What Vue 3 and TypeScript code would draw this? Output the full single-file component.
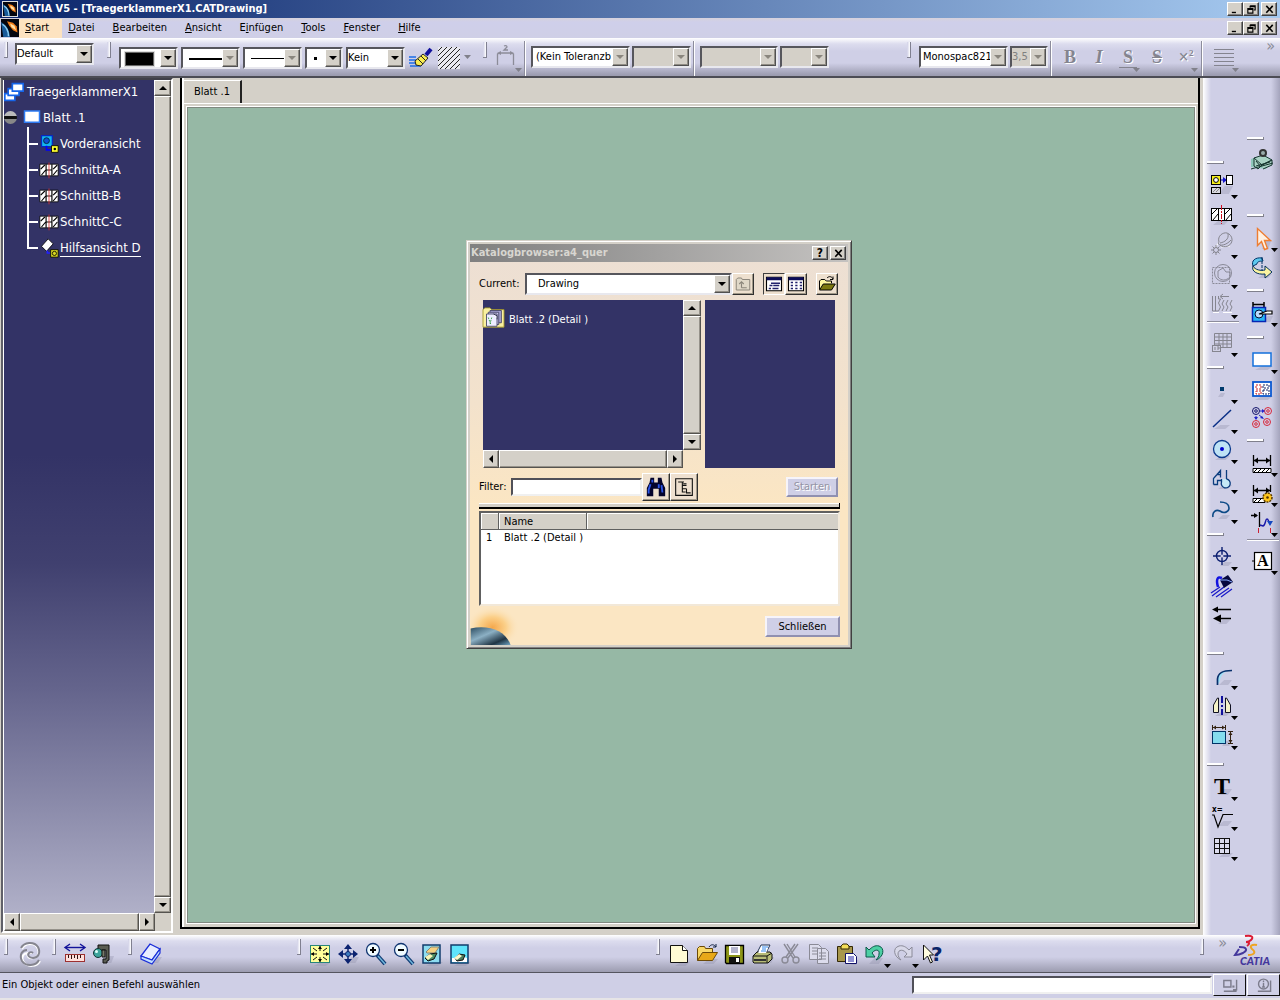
<script setup lang="ts">
import { h, ref } from 'vue'

const shade = (x: number, y: number, w: number, ht: number) =>
  `<path d="M${x} ${y + ht}L${x + w * 0.4} ${y}H${x + w}L${x + w * 0.7} ${y + ht}Z" fill="#8e8ea8" opacity=".35"/>`

const icons: Record<string, string> = {
  newView: shade(9, 13, 14, 8) + '<rect x="1.5" y="2.5" width="9" height="9" fill="#f6ee1c" stroke="#000"/><circle cx="6" cy="7" r="2.4" fill="#fff" stroke="#000"/><path d="M11 7h3" stroke="#00c"/><path d="M13 4l4 3-4 3z" fill="#11c"/><rect x="16.500" y="2.500" width="6" height="9" fill="#fff" stroke="#000"/><rect x="1.500" y="14.500" width="9" height="6" fill="#d8d8e0" stroke="#000"/><path d="M3 19l4-4M6 19l4-4" stroke="#888"/>',
  section: shade(3, 17, 16, 5) + '<rect x="1.500" y="5.500" width="20" height="12" fill="#fff" stroke="#000"/><path d="M8.500 5v13M14.500 5v13M2 11l5-5M3 17l5-6M15 11l5-5M16 17l5-6" stroke="#000"/><path d="M11.500 2v19" stroke="#d01020" stroke-dasharray="5 1 2 1"/>',
  detailView: '<path d="M9 9l-4 6M11 14l9-1" stroke="#fff"/><g fill="none" stroke="#85858f"><path d="M9 9C7 3 13-1 17 0c6 2 7 10 1 13-3 1-6 1-8-1"/><path d="M10 10c5-1 9-4 8-9M9 9c-3 4 6 5 12-2"/><circle cx="6" cy="17" r="2.500"/><path d="M6 12v3M6 19v3M1 17h3M8 17h3M2.500 13.500l2 2M7.500 18.500l2 2M9.500 13.500l-2 2M4.500 18.500l-2 2"/></g>',
  clipping: '<g fill="none" stroke="#8a8a98"><circle cx="13" cy="10" r="8.500"/><path d="M8 14V8l5-3 3 4h4v5c-4 4-9 4-12 0z"/><path d="M2.500 4.500h17v16h-17z" stroke-dasharray="2 1"/></g>',
  broken: '<path d="M3 19.500h6M13 19.500h9" stroke="#fff"/><g fill="none" stroke="#85858f"><path d="M2.500 3v15h6l2-4-2-4 2-4h-2V3M14 7l-2 4 2 3-2 4M18 7l-2 4 2 3-2 4M22 7l-2 4 2 3-2 4M11 3.500h8M13 1l-3 2.500L13 6M5.500 3v15"/></g>',
  wizard: '<g fill="none" stroke="#85858f"><path d="M4.500 2.500h17v14h-17zM4 6h17M4 9.500h17M4 13h17M9 3v13M13 3v13M17 3v13"/><rect x="2.500" y="14.500" width="8" height="6" fill="#d0d0e4"/><path d="M5 16v3M7 16h2v2H7"/></g>',
  point: shade(8, 15, 7, 4) + '<rect x="10" y="9" width="4" height="4" fill="#003a6c"/>',
  line: shade(4, 17, 16, 4) + '<path d="M3 19L21 2" stroke="#0a2f86" stroke-width="1.500"/>',
  circle: shade(5, 18, 15, 4) + '<circle cx="12" cy="11" r="8.500" fill="#bfe3f5" stroke="#0c3a8c" stroke-width="1.300"/><circle cx="12" cy="11" r="2" fill="#0000d0"/>',
  profile: shade(8, 17, 14, 4) + '<path d="M3.500 16.500v-6l7-8v4h-4M16.500 2v9M10.500 2.500V9.500M3.500 16.500h4v-4h4M16.500 11a4.500 4.500 0 1 1-5 3v-3" fill="#c5e9f6" stroke="#0b3c7e" stroke-width="1.300"/>',
  spline: shade(8, 17, 12, 4) + '<path d="M3 19c-1-5 3-8 7-6 4 3 9 1 9-3 0-4-4-6-9-6" fill="none" stroke="#0c4a86" stroke-width="1.600"/>',
  axis: shade(10, 17, 12, 4) + '<circle cx="12" cy="11" r="5.500" fill="none" stroke="#0c1f70" stroke-width="1.400"/><path d="M12 2v18M3 11h18" stroke="#0c1f70" stroke-width="1.400"/><circle cx="12" cy="11" r="1.500" fill="#d0d0e8"/>',
  fill: '<path d="M2 21L14 12M6 22l13-9M11 22l11-8M1 18l9-6" stroke="#1818c8" stroke-width="1.200"/><path d="M10 5l8-5 5 7-9 6z" fill="#05073c"/><path d="M10 5l7 0 5 2" stroke="#8af" fill="none"/><path d="M12 3C7 1 6 5 8 12" stroke="#1414e0" stroke-width="2.500" fill="none"/>',
  arrows: shade(8, 15, 12, 4) + '<path d="M6 4.500h15M9 13.500h12" stroke="#000" stroke-width="1.400"/><path d="M2 4.500l6-3v6zM3 13.500l8-4v8z" fill="#000"/>',
  corner: shade(9, 16, 13, 5) + '<path d="M8 20V16C8 10 12 6 22 6L17 7C12 9 10 14 10 17z" fill="#9fe0f6"/><path d="M7.500 21V15C8 9 12 6.500 22 6.500" stroke="#08306c" stroke-width="1.700" fill="none"/>',
  mirror: shade(5, 18, 16, 4) + '<path d="M3.500 18.500V11l4-7h1v14.500zM20.500 18.500V11l-4-7h-1v14.500z" fill="#f5f2c8" stroke="#112"/><path d="M12 2v19" stroke="#10109c" stroke-width="2" stroke-dasharray="7 2 2 2"/>',
  dims: shade(12, 17, 10, 5) + '<rect x="2.500" y="7.500" width="13" height="12" fill="#84dcee" stroke="#036"/><path d="M2.500 1v5M15.500 1v5M3 3.500h12M18 7.500h5M18 19.500h5M20.500 8v11" stroke="#321"/><path d="M3 3.500l3-2v4zM15 3.500l-3-2v4zM20.500 8l-2 3h4zM20.500 19l-2-3h4z" fill="#321"/>',
  text: shade(8, 14, 14, 6) + '<text x="4" y="19" font-family="Liberation Serif, serif" font-weight="700" font-size="24">T</text>',
  rough: shade(8, 16, 14, 5) + '<text x="2" y="7" font-family="DejaVu Sans Condensed, sans-serif" font-size="8" font-weight="700">x=</text><path d="M2 10h2l4 12 5-12.500h10" fill="none" stroke="#000" stroke-width="1.200"/>',
  grid: shade(9, 18, 14, 4) + '<path d="M4.500 3.500h15v15h-15zM4 8.500h15M4 13.500h15M9.500 4v14M14.500 4v14" fill="#dde" stroke="#111" shape-rendering="crispEdges"/>',
  bench: '<path d="M1 10l6-2 15 3-6 9-15-2z" fill="#8fc7ba"/><path d="M4 9l9-3 9 5-10 5zM4 9v8l4 3 4-4M12 16l10-5v5l-9 4M1 20l22-6" fill="#a9d2c4" stroke="#16352f"/><path d="M6 17l14-4M6 12l5 6" stroke="#16352f"/><circle cx="13" cy="4" r="4" fill="#333"/><circle cx="13" cy="4" r="2" fill="#9aa"/>',
  select: shade(12, 15, 9, 8) + '<path d="M7.500 2.500v17l4-4 3 8 3-1-3-8h6z" fill="#fff1e2" stroke="#ee7d31" stroke-width="1.400"/>',
  rotate: shade(8, 18, 14, 4) + '<path d="M12 2C5 1 1 5 3 10l4-2c0-2 2-3 6-3z" fill="#5cc8ee" stroke="#036"/><path d="M3 10c2 4 8 5 12 4v-4l7 6-7 6v-4C7 19 1 15 3 10z" fill="#fbf4a0" stroke="#02305c"/><path d="M12 1v14" stroke="#036" stroke-dasharray="3 1"/>',
  catalog: shade(14, 15, 9, 6) + '<path d="M3 1v5M14 1v5M3 3.500h11" stroke="#000" stroke-width="1.500"/><path d="M2.500 6.500h13v14h-13z" fill="#28b4f4" stroke="#0626b4" stroke-width="1.500"/><circle cx="9" cy="13" r="4" fill="#bdf" stroke="#013"/><path d="M9 13L17 10h5v3h-5z" stroke="#000" stroke-width="1.200" fill="#fff"/>',
  sheet: shade(5, 18, 18, 4) + '<rect x="3" y="5" width="18" height="13" fill="#fff" stroke="#1370dc" stroke-width="1.500"/>',
  sheetDetail: shade(5, 18, 18, 4) + '<rect x="3" y="4" width="18" height="14" fill="#fff" stroke="#0a58d0" stroke-width="1.800"/><path d="M6 7h5v4H6zM6 13h5v3H6z" fill="none" stroke="#c22" stroke-dasharray="2 1"/><path d="M13 7h6v3h-6zM13 12h6v4h-6z" fill="none" stroke="#126" stroke-dasharray="2 1"/>',
  instances: '<g fill="none"><g stroke="#14146c"><circle cx="6" cy="3" r="3.500"/><circle cx="6" cy="3" r="1.300"/></g><g stroke="#d8283c"><circle cx="18" cy="3" r="3.500"/><circle cx="18" cy="3" r="1.300"/><circle cx="6" cy="16" r="3.500"/><circle cx="6" cy="16" r="1.300"/><circle cx="17" cy="14" r="3.500"/><circle cx="17" cy="14" r="1.300"/></g></g><path d="M10 3h3M6 8v3M9 7l4 3" stroke="#22c"/><path d="M12 1l3 2-3 2zM4 9h4l-2 3zM14 11l-4-1 2-2z" fill="#22c"/>',
  dimension: '<path d="M3.500 4v11M20.500 4v11M4 9.500h16" stroke="#000" stroke-width="1.300"/><path d="M4 9.500l4-3v6zM20 9.500l-4-3v6z" fill="#000"/><path d="M3 17.500h18v4H3z" fill="#fff" stroke="#000"/><path d="M4 21l3-3M8 21l3-3M12 21l3-3M16 21l3-3" stroke="#000"/>',
  dimensionGear: '<path d="M3.500 4v11M20.500 4v7M4 9.500h16" stroke="#000" stroke-width="1.300"/><path d="M4 9.500l4-3v6zM20 9.500l-4-3v6z" fill="#000"/><path d="M3 17.500h12v4H3z" fill="#fff" stroke="#000"/><path d="M4 21l3-3M8 21l3-3" stroke="#000"/><circle cx="17.500" cy="16.500" r="4.500" fill="#ffc61c" stroke="#5c3c00" stroke-dasharray="2 1" stroke-width="1.500"/><circle cx="17.500" cy="16.500" r="1.300" fill="#530"/>',
  interrupt: '<path d="M1 4.500h6M9.500 1v15" stroke="#000" stroke-width="1.300"/><path d="M8 4.500L4 2v5z" fill="#000"/><path d="M10 14l3 1c3-1 2-7 4-7s1 5 4 3" fill="none" stroke="#1818a8" stroke-width="1.400"/><path d="M17 10h6l-3 5z" fill="#1448c0"/><path d="M8.500 17v5M20.500 17v5" stroke="#c23"/>',
  frame: '<rect x="4.500" y="3.500" width="17" height="17" fill="#fff" stroke="#000" stroke-width="1.200"/><path d="M2 12h3" stroke="#000"/><text x="7" y="17" font-family="Liberation Serif, serif" font-weight="700" font-size="16">A</text>',
  update: '<g fill="none" stroke="#fff" stroke-width="2"><path d="M4 7c3-6 13-7 16 0 2 5-1 9-5 9-5 1-7-3-4-5h3M22 19c-3 6-13 7-17 0-2-5 1-8 5-8"/></g><g fill="none" stroke="#85858f" stroke-width="2"><path d="M3 6c3-6 13-7 17-1 3 6 0 11-5 11-4 0-6-3-4-5 1-1 3-1 4 0M21 18c-3 6-13 7-17 1-3-6 0-11 5-11"/></g>',
  measure: '<path d="M3 5.500h18" stroke="#12129a" stroke-width="1.400"/><path d="M7 2L2 5.500 7 9M17 2l5 3.500L17 9" fill="none" stroke="#12129a" stroke-width="1.400"/><rect x="2.500" y="12.500" width="19" height="7" fill="#ffe0dc" stroke="#9c3030"/><path d="M5.500 13v3M8.500 13v4M11.500 13v3M14.500 13v4M17.500 13v3" stroke="#301010"/>',
  caliper: shade(14, 14, 9, 7) + '<path d="M7 3h11v15l-2 1v2h-4v-4h3V8H7z" fill="#5a5c52" stroke="#111"/><circle cx="7" cy="11" r="4.500" fill="#3ca49c" stroke="#133"/><path d="M11 8h3v7h-3z" fill="#777a6a" stroke="#111"/><circle cx="5.500" cy="9.500" r="1.500" fill="#e0fff8"/>',
  book: shade(10, 15, 13, 6) + '<path d="M2 14L11 2l10 5-8 11z" fill="#e8edff" stroke="#1b2ed8" stroke-width="1.300"/><path d="M2 14v3l11 5 8-11V7l-8 11z" fill="#c3e1ff" stroke="#1b2ed8" stroke-width="1.200"/>',
  fitAll: shade(6, 20, 17, 4) + '<rect x="2.500" y="3.500" width="19" height="17" fill="#ffff9a" stroke="#28857a"/><path d="M12 4v5M12 15v5M3 12h6M15 12h6M5 6l4 3M19 6l-4 3M5 18l4-3M19 18l-4-3" stroke="#111"/><path d="M12 4l-2 3h4zM12 20l-2-3h4zM3 12l3-2v4zM21 12l-3-2v4z"/>',
  pan: shade(11, 15, 12, 6) + '<path d="M12 4v16M4 12h16" stroke="#0c2370" stroke-width="1.500"/><path d="M12 2l-4 5h8zM12 22l-4-5h8zM2 12l5-4v8zM22 12l-5-4v8z" fill="#0c2370"/><circle cx="12" cy="12" r="2.500" fill="#3d7cc0" stroke="#0c2370"/>',
  zoomIn: '<path d="M13 13l8 9" stroke="#0f3b74" stroke-width="4"/><path d="M14 14l7 8" stroke="#6fb6dc" stroke-width="1.500"/><circle cx="9" cy="8" r="6.500" fill="#f0fbff" stroke="#0f3470" stroke-width="1.300"/><path d="M9 5v6M6 8h6" stroke="#000" stroke-width="2"/>',
  zoomOut: '<path d="M13 13l8 9" stroke="#0f3b74" stroke-width="4"/><path d="M14 14l7 8" stroke="#6fb6dc" stroke-width="1.500"/><circle cx="9" cy="8" r="6.500" fill="#f0fbff" stroke="#0f3470" stroke-width="1.300"/><path d="M6 8h6" stroke="#000" stroke-width="2"/>',
  hide: shade(6, 20, 17, 4) + '<rect x="3" y="3" width="17" height="18" fill="#8cdcf0" stroke="#123c6c" stroke-width="1.500"/><path d="M6 10l5-5h8l-4 6H7z" fill="#f4d080" stroke="#887"/><path d="M5 16l5-4 7-1-3 6-6 2z" fill="#4c8c64" stroke="#111"/><path d="M5 15l5-3 3 2-5 4z" fill="#f8f4b8"/>',
  swap: shade(6, 20, 17, 4) + '<rect x="3" y="3" width="17" height="18" fill="#5ee4fb" stroke="#123c6c" stroke-width="1.500"/><path d="M4 20v-4h4l3-3 8 3v4z" fill="#fff"/><path d="M7 16l4-4 6 1-2 5-6 1z" fill="#4c7c5c" stroke="#111"/><path d="M6 16l5-4 3 2-5 4z" fill="#fbf8cc"/>',
  newDoc: shade(8, 20, 15, 4) + '<path d="M3.500 3.500h12l5 5v12h-17z" fill="#fffbd4" stroke="#111"/><path d="M15.500 3.500v5h5" fill="#fff" stroke="#111"/>',
  open: shade(8, 17, 15, 5) + '<path d="M2.500 18.500V6.500l2-2h5l1 2h7v4" fill="#f8d868" stroke="#6c4a08"/><path d="M2.500 18.500l5-8h15l-5 8z" fill="#e8a818" stroke="#6c4a08"/><path d="M14 5c2-3 5-3 7 0M21 5V2M21 5h-3" fill="none" stroke="#124"/>',
  save: '<path d="M2.500 3.500h18v18h-17l-1-1z" fill="#8c9418" stroke="#000" stroke-width="1.300"/><rect x="6" y="4" width="11" height="9" fill="#fff"/><path d="M8 6h7M8 8h7M8 10h7" stroke="#669"/><rect x="6" y="15" width="11" height="6" fill="#111"/><rect x="13" y="16" width="3" height="4" fill="#fff"/>',
  print: shade(14, 15, 9, 6) + '<path d="M6 11l4-8h9l-4 8z" fill="#fff" stroke="#235"/><path d="M11 5h6M10 7h6M9 9h6" stroke="#38e"/><path d="M2 14l4-4h13l2 2v5l-4 4H3l-1-1z" fill="#b8bc78" stroke="#111"/><path d="M7 11l3-5h7l-2 5z" fill="#fff"/><path d="M11 7h4M10 9h5" stroke="#38e"/><path d="M2 14h14l5-3M16 14v7" fill="none" stroke="#111"/><path d="M3 18h12" stroke="#333" stroke-width="2"/>',
  cut: '<g fill="none" stroke="#8a8a96" stroke-width="1.400"><path d="M5 2l9 14M8 2l8 13M19 2L9 16M16 2L7 15"/><circle cx="6" cy="18" r="3"/><circle cx="17" cy="18" r="3"/></g>',
  copy: '<g stroke="#8a8a96" fill="#dcdcec"><path d="M2.500 2.500h9l3 3v12h-12zM10.500 6.500h8l3 3v12h-11z"/><path d="M5 6h6M5 9h5M5 12h5M12 11h7M12 14h7M12 17h7"/></g>',
  paste: shade(16, 18, 7, 5) + '<path d="M2.500 4.500h15v15h-15z" fill="#a8974c" stroke="#332806"/><path d="M6 4l2-2h4l2 2v3H6z" fill="#f2dc58" stroke="#332806"/><path d="M10.500 11.500h8l3 3v7h-11z" fill="#fff" stroke="#116"/><path d="M13 15h6M13 17h6M13 19h6" stroke="#22a"/>',
  undo: shade(6, 16, 14, 6) + '<path d="M3 5v10h9l-3-4c3-4 8-4 7 1 0 2-1 4-3 6 8-3 9-12 3-14C12 3 9 5 6 8z" fill="#4ccfa4" stroke="#0a5848"/>',
  redo: '<path d="M21 5v10h-8l3-3c-3-5-9-5-9 0 0 2 1 4 3 6-7-3-9-12-2-14 4-1 7 1 10 4z" fill="#d8d8e8" stroke="#8a8a98"/>',
  whatsThis: '<path d="M4.500 3v15l4-4 3 7 2-1-3-7h4z" fill="#fffde0" stroke="#111"/><text x="12" y="19" font-family="DejaVu Sans, sans-serif" font-weight="700" font-size="20" fill="#0a2468">?</text>',
  brush: '<path d="M0 11h7M0 14h7M0 17h10M1 20h11" stroke="#1b6ee8" stroke-width="1.500"/><path d="M6 15l8-7 5 4-7 8-5-1z" fill="#f8ec50" stroke="#222"/><path d="M9 13l5 5M12 10l5 5" stroke="#222"/><path d="M17 9l5-6" stroke="#10109c" stroke-width="4"/>',
  hatch: '<rect x="1" y="1" width="22" height="22" fill="#e8e8f0"/><path d="M1 5l4-4M1 10l9-9M1 15L15 1M1 20L20 1M3 23L23 3M8 23L23 8M13 23l10-10M18 23l5-5" stroke="#222"/>',
  dimStyle: '<g fill="none" stroke="#8c8c98" stroke-width="1.300"><path d="M2.500 20V9l3-1h10l3 1v11"/><path d="M9 1c2-1 3 0 3 1l-3 3h4"/></g><path d="M2 8l4-2v4zM19 8l-4-2v4z" fill="#8c8c98"/>',
  minus: '<path d="M4 17h9v3H4z"/>',
  restore: '<path d="M9 4h11v9h-3M9 4v4M9 6h11M4 10h11v10H4zM4 12h11" fill="none" stroke="#000" stroke-width="2.500"/>',
  close: '<path d="M5 4l14 15M19 4L5 19" stroke="#000" stroke-width="3.500"/>',
  folderUp: '<path d="M3 20V6l2-2h5l1 2h10v14z" fill="#e0d8c8" stroke="#8a857a" stroke-width="1.300"/><path d="M10 17v-6M10 17h7M7 12l3-3 3 3" fill="none" stroke="#8a857a" stroke-width="1.500"/>',
  listA: '<path d="M2 3h20v18H2z" fill="#fff" stroke="#000" stroke-width="1.500"/><path d="M2 3h20v4H2z" fill="#0c0c58"/><path d="M8 11h12M6 14h4M11 14h8M5 18h3M10 18h8" stroke="#22226c" stroke-width="1.700"/>',
  listB: '<path d="M2 3h20v18H2z" fill="#fff" stroke="#000" stroke-width="1.500"/><path d="M2 3h20v4H2z" fill="#0c0c58"/><path d="M5 10h3M11 10h3M17 10h3M5 14h3M11 14h3M17 14h3M5 18h3M11 18h3M17 18h3" stroke="#22226c" stroke-width="2"/>',
  folderOpen: '<path d="M2 19V8l2-2h5l2 2h7v3" fill="#fff8a0" stroke="#000" stroke-width="1.300"/><path d="M2 20l5-8h16l-5 8z" fill="#7c7810" stroke="#000" stroke-width="1.300"/><path d="M12 4c3-3 6-2 8 1M20 6V2M20 6h-4" fill="none" stroke="#000" stroke-width="1.300"/>',
  binoculars: '<path d="M6 2h4v5h4V2h4l1 5 3 6v9h-7v-8H9v8H2v-9l3-6z" fill="#04042c"/><path d="M6 9l-2 6v4M15 9v4M18 10l1 8M8 4v3" stroke="#2b55e8" stroke-width="2" fill="none"/>',
  treeBtn: '<path d="M2 2h20v20H2z" fill="none" stroke="#111" stroke-width="1.300"/><path d="M5 6h7M10 6v12h4M10 10h5M10 14h5M15 14v5h5M11 8h4" fill="none" stroke="#111" stroke-width="1.300"/>',
  root: '<path d="M1 14h12v8H1z" fill="#fff" stroke="#1564e8" stroke-width="2"/><path d="M5 8h13v8H5z" fill="#fff" stroke="#1564e8" stroke-width="2"/><path d="M10 2h13v9H10z" fill="#fff" stroke="#1564e8" stroke-width="2"/>',
  leafSheet: '<path d="M2 4h20v15H2z" fill="#fff" stroke="#2e7cf4" stroke-width="2"/>',
  front: '<path d="M3 2h13v13H3z" fill="#12b6f0" stroke="#0828c0" stroke-width="1.500"/><circle cx="9" cy="8" r="3.500" fill="#1050d0" stroke="#023"/><path d="M9 14v5h6" fill="none" stroke="#00f" stroke-width="2"/><path d="M15 14h8v8h-8z" fill="#ffff30" stroke="#000"/><circle cx="19" cy="18" r="1.500"/>',
  cut3: '<path d="M1 5h22v14H1z" fill="#fff" stroke="#000"/><path d="M8.500 5v14M15.500 5v14M2 11l5-5M3 18l5-6M17 11l5-5M17 18l5-6M9 12h6" stroke="#000" stroke-width="1.400"/><path d="M12 3v19" stroke="#d33"/>',
  aux: '<path d="M3 10l8-9 6 6-8 9z" fill="#fff" stroke="#000"/><path d="M10 15v4M10 18h4" stroke="#22f" stroke-width="2"/><path d="M14 14h9v9h-9z" fill="#d8d820" stroke="#000"/><circle cx="18.500" cy="18.500" r="2.500" fill="none" stroke="#000"/>',
  catalogItem: '<path d="M0 3l2-2h6l2 2h14v20H0z" fill="#f9f0a0" stroke="#a49828"/><path d="M8 4h13v14H8z" fill="#a8a4d4" stroke="#446"/><path d="M6 6h12v14H6z" fill="#c8c4e8" stroke="#446"/><path d="M4 8h12v14H4z" fill="#eef" stroke="#446"/><path d="M6 12l3 8M10 12l-2 7" stroke="#2c9c3c" stroke-dasharray="2 1"/><path d="M12 8l4 2v4" stroke="#224" fill="#fff"/>',
  planet: '<rect width="24" height="24" fill="#05060f"/><path d="M8 3l8 2 5 5 1 8-6-3-5-6z" fill="#f07c18"/><path d="M12 6l6 3 2 6-6-4z" fill="#ffe2a8"/><path d="M0 4c6 3 11 9 12 20H3z" fill="#185a98"/><path d="M2 7c6 4 8 9 8 16" stroke="#8ed0f4" fill="none" stroke-width="2"/>',
  statusA: '<path d="M4 5h10v9H4zM17 18h5V4M4 20h18" fill="none" stroke="#7c7c8c" stroke-width="2"/><path d="M16 12h3v3h-3z" fill="#7c7c8c"/>',
  statusB: '<circle cx="12" cy="10" r="7" fill="none" stroke="#7c7c8c" stroke-width="2"/><path d="M12 8v7M10 14h4M11 6h2M4 20h18V5" fill="none" stroke="#7c7c8c" stroke-width="2"/>',
}

const Icon = (p: { n: string; s?: number }) =>
  h('svg', { viewBox: '0 0 24 24', width: p.s ?? 24, height: p.s ?? 24, 'aria-hidden': 'true', innerHTML: icons[p.n] })
Icon.props = ['n', 's']

const menus = ['Start', 'Datei', 'Bearbeiten', 'Ansicht', 'Einfügen', 'Tools', 'Fenster', 'Hilfe']
const accel: Record<string, number> = { 'Einfügen': 1 }
const winButtons = ['minus', 'restore', 'close']

type Tool = { n: string; arrow?: boolean; sep?: boolean }
type Group = { gap: string; tools: Tool[] }
const t = (n: string, arrow = true, sep = false): Tool => ({ n, arrow, sep })

const leftTools: Group[] = [
  { gap: 'first-a', tools: [t('newView'), t('section'), t('detailView'), t('clipping'), t('broken'), t('wizard', true, true)] },
  { gap: 'near', tools: [t('point'), t('line'), t('circle'), t('profile'), t('spline')] },
  { gap: 'near', tools: [t('axis'), t('fill', false), t('arrows', false)] },
  { gap: 'mid', tools: [t('corner'), t('mirror'), t('dims')] },
  { gap: 'some', tools: [t('text'), t('rough'), t('grid')] },
]
const rightTools: Group[] = [
  { gap: 'first-b', tools: [t('bench', false)] },
  { gap: 'far', tools: [t('select'), t('rotate', false)] },
  { gap: 'snug', tools: [t('catalog')] },
  { gap: 'near', tools: [t('sheet'), t('sheetDetail', false), t('instances', false)] },
  { gap: 'tight', tools: [t('dimension'), t('dimensionGear'), t('interrupt'), t('frame', true, true)] },
]
const bottomGroups: { cls: string; tools: Tool[] }[] = [
  { cls: 'b1', tools: [t('update', false)] },
  { cls: 'b2', tools: [t('measure', false), t('caliper', false)] },
  { cls: 'b3', tools: [t('book', false)] },
  { cls: 'b4', tools: ['fitAll', 'pan', 'zoomIn', 'zoomOut', 'hide', 'swap'].map((n) => t(n, false)) },
  { cls: 'b5', tools: [...['newDoc', 'open', 'save', 'print', 'cut', 'copy', 'paste'].map((n) => t(n, false)), t('undo'), t('redo'), t('whatsThis', false)] },
]
const views = [
  { n: 'front', label: 'Vorderansicht' },
  { n: 'cut3', label: 'SchnittA-A' },
  { n: 'cut3', label: 'SchnittB-B' },
  { n: 'cut3', label: 'SchnittC-C' },
  { n: 'aux', label: 'Hilfsansicht D' },
]
const filter = ref('')
const command = ref('')
</script>

<template>
  <div class="app">
    <header class="titlebar">
      <Icon n="planet" :s="16" class="app-icon" />
      <h1>CATIA V5 - [TraegerklammerX1.CATDrawing]</h1>
      <div class="winbtns">
        <button v-for="b in winButtons" :key="b" class="wbtn" :class="b" :aria-label="b"><Icon :n="b" :s="11" /></button>
      </div>
    </header>

    <nav class="menubar">
      <Icon n="planet" :s="18" />
      <button v-for="(m, i) in menus" :key="m" class="menu" :class="{ hot: i === 0 }"><span>{{ m.slice(0, accel[m] ?? 0) }}<u>{{ m[accel[m] ?? 0] }}</u>{{ m.slice((accel[m] ?? 0) + 1) }}</span></button>
      <div class="winbtns">
        <button v-for="b in winButtons" :key="b" class="wbtn" :class="b" :aria-label="b"><Icon :n="b" :s="11" /></button>
      </div>
    </nav>

    <div class="toolbar">
      <div class="tgroup g-style">
        <i class="grip" />
        <span class="combo c-default"><select aria-label="Stil"><option>Default</option></select><i class="drop" /></span>
      </div>
      <div class="tgroup g-graphic">
        <i class="grip" />
        <span class="combo c-line"><select aria-label="Farbe"><option></option></select><i class="swatch" /><i class="drop" /></span>
        <span class="combo c-line"><select aria-label="Linienstärke"><option></option></select><i class="stroke thick" /><i class="drop off" /></span>
        <span class="combo c-line"><select aria-label="Linientyp"><option></option></select><i class="stroke" /><i class="drop off" /></span>
        <span class="combo c-dot"><select aria-label="Punktsymbol"><option></option></select><i class="dot" /><i class="drop" /></span>
        <span class="combo c-line"><select aria-label="Layer"><option>Kein</option></select><i class="drop" /></span>
        <button class="flat" aria-label="Format übertragen"><Icon n="brush" /></button>
        <button class="flat" aria-label="Muster"><Icon n="hatch" /></button>
        <i class="tri off" />
      </div>
      <div class="tgroup g-dim">
        <i class="grip" />
        <button class="flat wide" aria-label="Bemaßungsstil" disabled><Icon n="dimStyle" /><i class="tri off low" /></button>
        <i class="vsep" />
        <span class="combo c-tol"><select aria-label="Toleranz"><option>(Kein Toleranzbereich)</option></select><i class="drop off" /></span>
        <span class="combo c-line gray"><select aria-label="Toleranzwert" disabled><option></option></select><i class="drop off" /></span>
        <i class="vsep" />
        <span class="combo c-num gray"><select aria-label="Einheit" disabled><option></option></select><i class="drop off" /></span>
        <span class="combo c-prec gray"><select aria-label="Genauigkeit" disabled><option></option></select><i class="drop off" /></span>
      </div>
      <div class="tgroup g-text">
        <i class="grip" />
        <span class="combo c-font"><select aria-label="Schriftart"><option>Monospac821</option></select><i class="drop off" /></span>
        <span class="combo c-size gray"><select aria-label="Schriftgröße" disabled><option>3,5</option></select><i class="drop off" /></span>
        <i class="vsep" />
        <button class="fmt" disabled>B</button>
        <button class="fmt" disabled><em>I</em></button>
        <button class="fmt" disabled><span class="und">S</span><i class="tri off low" /></button>
        <button class="fmt" disabled><s>S</s></button>
        <button class="fmt sup" disabled>×<sup>2</sup><i class="tri off low" /></button>
        <i class="vsep" />
        <button class="fmt al" aria-label="Ausrichtung" disabled><i class="lines" /><i class="tri off low" /></button>
        <span class="more">»</span>
      </div>
    </div>

    <div class="middle">
      <aside class="side">
        <div class="side-row">
          <div class="tree">
            <div class="node root"><Icon n="root" :s="20" /><span>TraegerklammerX1</span></div>
            <div class="node sheet"><i class="knob" /><Icon n="leafSheet" :s="18" /><span>Blatt .1</span></div>
            <ul class="views">
              <li v-for="(v, i) in views" :key="v.label" class="node" :class="{ active: i === 4 }"><i class="twig" /><Icon :n="v.n" :s="20" /><span>{{ v.label }}</span></li>
            </ul>
          </div>
          <div class="scroll v"><button class="sb up" aria-label="Nach oben" /><i class="thumb" /><button class="sb down" aria-label="Nach unten" /></div>
        </div>
        <div class="side-foot">
          <div class="scroll h"><button class="sb left" aria-label="Nach links" /><i class="thumb" /><button class="sb right" aria-label="Nach rechts" /></div>
          <i class="corner" />
        </div>
      </aside>

      <main class="work">
        <div class="tabs"><button class="tab">Blatt .1</button></div>
        <div class="canvas">
          <section class="dialog" role="dialog" aria-labelledby="dlg-title">
            <header class="dlg-title">
              <h2 id="dlg-title">Katalogbrowser:a4_quer</h2>
              <button class="wbtn q" aria-label="Hilfe">?</button>
              <button class="wbtn close" aria-label="Schließen"><Icon n="close" :s="11" /></button>
            </header>
            <div class="dlg-body">
              <div class="row current">
                <label for="cur">Current:</label>
                <span class="combo c-cur"><select id="cur"><option>Drawing</option></select><i class="drop" /></span>
                <button class="ib" aria-label="Übergeordnet"><Icon n="folderUp" :s="18" /></button>
                <button class="ib on gapped" aria-label="Liste"><Icon n="listA" :s="18" /></button>
                <button class="ib" aria-label="Symbole"><Icon n="listB" :s="18" /></button>
                <button class="ib gapped" aria-label="Öffnen"><Icon n="folderOpen" :s="18" /></button>
              </div>
              <div class="panes">
                <div class="browse">
                  <div class="list"><Icon n="catalogItem" :s="21" /><span>Blatt .2 (Detail )</span></div>
                  <div class="scroll v"><button class="sb up" aria-label="Nach oben" /><i class="thumb" /><button class="sb down" aria-label="Nach unten" /></div>
                  <div class="scroll h"><button class="sb left" aria-label="Nach links" /><i class="thumb" /><button class="sb right" aria-label="Nach rechts" /></div>
                </div>
                <div class="preview" />
              </div>
              <div class="row filter">
                <label for="flt">Filter:</label>
                <input id="flt" v-model="filter" type="text" />
                <button class="ib big" aria-label="Suchen"><Icon n="binoculars" :s="22" /></button>
                <button class="ib big" aria-label="Baum"><Icon n="treeBtn" :s="20" /></button>
                <button class="push start" disabled>Starten</button>
              </div>
              <i class="splitter" />
              <div class="tablebox">
                <table>
                  <thead><tr><th class="num"></th><th class="name">Name</th><th></th></tr></thead>
                  <tbody><tr><td>1</td><td>Blatt .2 (Detail )</td><td></td></tr></tbody>
                </table>
              </div>
            </div>
            <footer class="dlg-foot">
              <svg class="globe" viewBox="0 0 50 40" aria-hidden="true">
                <defs>
                  <radialGradient id="glow" cx="45%" cy="55%" r="55%"><stop offset="0" stop-color="#f5a84c" /><stop offset=".5" stop-color="#fbd08a" /><stop offset="1" stop-color="#fbe6c3" stop-opacity="0" /></radialGradient>
                  <linearGradient id="earth" x1="0" y1="0" x2="1" y2="1"><stop offset="0" stop-color="#2c4c60" /><stop offset=".4" stop-color="#8cb0c4" /><stop offset=".75" stop-color="#1f3444" /><stop offset="1" stop-color="#70a4c4" /></linearGradient>
                </defs>
                <rect width="50" height="40" fill="url(#glow)" />
                <path d="M0 23c18-4 36 2 41 17H0z" fill="url(#earth)" />
              </svg>
              <button class="push ok">Schließen</button>
            </footer>
          </section>
        </div>
      </main>

      <aside class="tools">
        <div v-for="(col, c) in [leftTools, rightTools]" :key="c" class="col">
          <div v-for="(g, i) in col" :key="i" class="vgroup" :class="g.gap">
            <i class="hgrip" />
            <template v-for="tool in g.tools" :key="tool.n">
              <i v-if="tool.sep" class="hsep" />
              <button class="tool" :aria-label="tool.n"><Icon :n="tool.n" /><i v-if="tool.arrow" class="tri" /></button>
            </template>
          </div>
        </div>
      </aside>
    </div>

    <div class="toolbar bottom">
      <div v-for="g in bottomGroups" :key="g.cls" class="bgroup" :class="g.cls">
        <i class="grip" />
        <button v-for="tool in g.tools" :key="tool.n" class="btool" :aria-label="tool.n"><Icon :n="tool.n" /><i v-if="tool.arrow" class="tri" /></button>
      </div>
      <div class="brand">
        <i class="grip" />
        <span class="more">»</span>
        <svg class="logo" viewBox="0 0 42 32" aria-label="CATIA">
          <path d="M11 1c7-1 9 1 6 4-1 1-3 2-5 2 4 0 4 2 1 4" fill="none" stroke="#dc1c34" stroke-width="2" />
          <path d="M5 12c8 0 9 3 4 6-2 1-5 2-8 2l4-6" fill="none" stroke="#44389c" stroke-width="2" />
          <path d="M23 10c-5-1-8 1-5 4 4 3 3 6-4 6" fill="none" stroke="#eca424" stroke-width="2" />
          <text x="6" y="30" font-family="Lato, sans-serif" font-weight="900" font-style="italic" font-size="11" fill="#44389c">CATIA</text>
        </svg>
      </div>
    </div>

    <footer class="status">
      <label for="cmd">Ein Objekt oder einen Befehl auswählen</label>
      <input id="cmd" v-model="command" type="text" />
      <button class="sbtn" aria-label="Befehlsfenster"><Icon n="statusA" :s="17" /></button>
      <button class="sbtn" aria-label="Information"><Icon n="statusB" :s="17" /></button>
    </footer>
  </div>
</template>

<style>
body { margin: 0; background: #cfcfe6; }
</style>

<style scoped>
.app { display: flex; flex-direction: column; min-height: 100vh; font: 11px/14px "DejaVu Sans Condensed", "DejaVu Sans", sans-serif; color: #000; background: #cfcfe6; overflow: hidden; }
.app *, .app *::before, .app *::after { box-sizing: border-box; }
button, input, select { font: inherit; color: inherit; margin: 0; padding: 0; border: 0; border-radius: 0; background: none; appearance: none; outline: 0; }
svg { display: block; flex: none; overflow: visible; }
i { display: block; flex: none; font-style: normal; }
h1, h2 { margin: 0; font-size: 11px; line-height: 18px; font-weight: 700; }

.titlebar { display: flex; align-items: center; height: 18px; padding: 0 3px 0 2px; background: linear-gradient(90deg, #0a246a, #a6caf0); color: #fff; }
.titlebar h1 { flex: 1; padding-left: 2px; }
.app-icon { border: 1px solid #ddd; overflow: hidden; }
.winbtns { display: flex; margin-left: auto; }
.wbtn { display: flex; align-items: center; justify-content: center; width: 16px; height: 14px; background: #d4d0c8; border: 1px solid; border-color: #fff #404040 #404040 #fff; box-shadow: inset -1px -1px #808080; color: #000; }
.winbtns .close { margin-left: 2px; }
.menubar { display: flex; align-items: center; height: 20px; padding: 0 3px 0 1px; background: linear-gradient(#d6d2dc, #cfcfea 4px, #cfcfe6); }
.menubar > svg { overflow: hidden; }
.menu { height: 20px; padding: 0 9px; }
.menu.hot { height: 19px; padding: 0 13px 0 6px; background: #fde3c0; margin-right: -3px; }

.toolbar { display: flex; height: 40px; background: linear-gradient(#fff, #dcdcee 6px, #cfcfe6 13px, #cfcfe6 25px, #9c9cb0 37px); border-bottom: 2px solid #4c4c54; }
.tgroup { display: flex; align-items: center; position: relative; }
.grip { width: 4px; height: 16px; align-self: flex-start; margin-top: 4px; border-right: 1px solid #808090; border-bottom: 1px solid #808090; background: linear-gradient(90deg, #cfcfe6, #fff); }
.g-style { width: 102px; padding-left: 4px; gap: 7px; }
.g-style .combo { align-self: flex-start; margin-top: 5px; }
.g-graphic { width: 377px; padding-left: 5px; gap: 3px; }
.g-graphic .combo { margin-top: 2px; }
.g-graphic .grip { margin-right: 5px; }
.g-graphic .flat { margin: 2px 0 0 1px; }
.g-dim { width: 428px; padding-left: 4px; gap: 2px; }
.g-dim .grip { margin-right: 6px; }
.g-dim .vsep { margin-right: 3px; }
.g-text { flex: 1; gap: 2px; }
.g-text .grip { margin-right: 6px; }
.combo { position: relative; display: block; flex: none; height: 22px; background: #fff; border: 2px solid; border-color: #56565c #e8e8ee #e8e8ee #56565c; }
.combo select { display: block; width: 100%; height: 100%; padding-right: 17px; opacity: 1; }
.combo.gray { background: #d4d0c8; color: #808080; }
.c-default { width: 79px; }
.c-line { width: 59px; }
.c-dot { width: 38px; }
.c-tol { width: 99px; }
.c-tol select { padding-left: 3px; }
.c-num { width: 78px; }
.c-prec { width: 49px; }
.c-font { width: 89px; }
.c-font select { padding: 0 0 0 2px; }
.c-size { width: 38px; }
.c-size select { padding: 0; }
.drop { position: absolute; top: 0; right: 0; bottom: 0; width: 16px; pointer-events: none; background: #d4d0c8; border: 1px solid; border-color: #fff #505050 #505050 #fff; box-shadow: inset -1px -1px #908c84; }
.drop::after { content: ""; position: absolute; left: 3px; top: calc(50% - 2px); border: 4px solid transparent; border-top-color: #000; border-bottom: 0; }
.drop.off::after { border-top-color: #8a867e; }
.swatch { position: absolute; left: 4px; top: 3px; width: 29px; height: 14px; background: #000; border: 1px solid #666; outline: 1px solid #ddd; pointer-events: none; }
.stroke { position: absolute; left: 6px; top: 9px; width: 33px; height: 1px; background: #000; pointer-events: none; }
.stroke.thick { height: 2px; }
.dot { position: absolute; left: 7px; top: 8px; width: 3px; height: 3px; background: #000; pointer-events: none; }
.flat { position: relative; height: 24px; }
.wide { width: 27px; }
.tri { width: 7px; height: 4px; background: #000; clip-path: polygon(0 0, 100% 0, 50% 100%); }
.tri.off { background: #80808a; }
.low { position: absolute; right: 2px; bottom: 0; }
.wide .low { right: 0; bottom: -3px; }
.vsep { width: 2px; align-self: stretch; margin-top: 3px; border-left: 1px solid #8c8c9c; border-right: 1px solid #fff; }
.fmt { position: relative; width: 28px; height: 30px; margin-left: 0; margin-right: -1px; font: 700 18px/24px "Liberation Serif", serif; color: #84848f; text-shadow: 1px 1px #fff; }
.g-text .vsep + .fmt { margin-left: 2px; }
.fmt .low { bottom: 0; }
.und { border-bottom: 1px solid #84848f; padding: 0 4px; }
.fmt s { padding: 0 3px; }
.sup sup { font-size: 9px; line-height: 9px; vertical-align: 7px; }
.al { width: 34px; }
.lines { width: 20px; height: 17px; margin: 0 auto; background: repeating-linear-gradient(#84848f 0 1px, transparent 1px 4px); }
.more { margin-left: auto; padding-right: 5px; align-self: flex-start; font-size: 16px; line-height: 15px; color: #8c8c98; }

.middle { display: flex; flex: 1; min-height: 857px; background: #d4d0c8; }
.side { display: flex; flex-direction: column; width: 172px; flex: none; margin: 0 0 2px 1px; border: 2px solid; border-color: #404048 #fff #fff #606068; box-shadow: inset 1px 0 #fff; padding-left: 1px; }
.side-row { display: flex; flex: 1; }
.tree { flex: 1; padding-top: 1px; background: linear-gradient(#333366 0 45%, #40406f 58%, #64648c 73%, #8888a8 86%, #b0b0c8); color: #fff; font-size: 13px; line-height: 18px; overflow: hidden; white-space: nowrap; }
.node { display: flex; align-items: center; height: 26px; }
.root { height: 22px; gap: 3px; }
.sheet span { padding-top: 1px; }
.sheet { height: 28px; gap: 2px; }
.sheet svg { margin-left: 4px; }
.knob { width: 13px; height: 13px; border-radius: 50%; background: linear-gradient(#bbb 5px, #111 5px 8px, #888 8px); }
.views { list-style: none; margin: 0; padding: 0 0 0 23px; }
.views .node { position: relative; gap: 1px; }
.views .node::before { content: ""; position: absolute; left: 0; top: -13px; width: 2px; height: 27px; background: #fff; }
.views .node:first-child::before { top: -4px; height: 18px; }
.twig { width: 11px; height: 2px; background: #fff; }
.active span { border-bottom: 1px solid #fff; line-height: 16px; }
.side-foot { display: flex; height: 18px; }
.side-foot .h { flex: 1; }
.corner { width: 16px; background: #d4d0c8; }
.scroll { display: flex; background: #e6e3de; }
.scroll.v { flex-direction: column; width: 17px; }
.thumb { flex: 1; }
.thumb, .sb { background: #d4d0c8; border: 1px solid; border-color: #fff #55534f #55534f #fff; box-shadow: inset -1px -1px #96928a; }
.sb { display: flex; align-items: center; justify-content: center; flex: none; }
.v .sb { height: 16px; width: 100%; }
.h .sb { width: 16px; height: 100%; }
.sb::after { content: ""; border: 4px solid transparent; }
.up::after { border-bottom-color: #000; border-top: 0; }
.down::after { border-top-color: #000; border-bottom: 0; }
.left::after { border-right-color: #000; border-left: 0; }
.right::after { border-left-color: #000; border-right: 0; }

.work { display: flex; flex-direction: column; flex: 1; min-width: 0; margin: 0 3px 6px 7px; border: solid #000; border-width: 0 2px 2px; box-shadow: inset 2px 0 #fff; padding: 2px 4px 5px 6px; }
.tabs { display: flex; height: 24px; margin: 0 -4px 4px; border-bottom: 1px solid #fff; }
.tab { width: 58px; height: 23px; border-top: 1px solid #fff; border-right: 2px solid #222; }
.canvas { position: relative; flex: 1; background: #96b8a5; outline: 1px solid #808880; box-shadow: 0 0 0 2px #fff; }

.dialog { position: absolute; left: 278px; top: 132px; width: 386px; display: flex; flex-direction: column; background: linear-gradient(#ecdfd4, #f3e2cc 40%, #fbe6c3 65%); border: 1px solid; border-color: #d4d0c8 #404040 #404040 #d4d0c8; box-shadow: inset 1px 1px #fff, inset -1px -1px #808080, inset 3px 3px #d4d0c8, inset -3px -3px #d4d0c8; padding: 3px; }
.dlg-title { display: flex; align-items: center; height: 18px; padding-right: 2px; background: linear-gradient(90deg, #808080, #c4c2c0); color: #d8d6d0; }
.dlg-title h2 { flex: 1; padding-left: 1px; }
.dlg-title .wbtn { margin-left: 2px; }
.q { font-weight: 700; font-size: 12px; line-height: 12px; }
.dlg-body { padding: 10px 8px 0 9px; }
.row { display: flex; align-items: center; }
.current { height: 24px; padding-right: 2px; }
.current label { width: 46px; }
.c-cur { flex: 1; }
.c-cur select { padding-left: 11px; }
.ib { display: flex; align-items: center; justify-content: center; width: 22px; height: 22px; border: 1px solid; border-color: #fff #303030 #303030 #fff; background: #eee0cf; box-shadow: inset -1px -1px #a09888; flex: none; }
.ib.on { border-color: #404040 #fff #fff #404040; box-shadow: none; }
.gapped { margin-left: 9px; }
.panes { display: flex; gap: 4px; padding: 4px 5px 0 4px; }
.browse { display: grid; grid-template-columns: 200px 18px; grid-template-rows: 150px 18px; }
.browse .v { width: 18px; }
.list { display: flex; align-items: flex-start; gap: 5px; padding-top: 7px; background: #333366; color: #fff; }
.list span { padding-top: 6px; }
.preview { flex: 1; background: #333366; }
.filter { height: 28px; margin-top: 5px; }
.filter label { width: 32px; }
.filter input, .status input { height: 18px; background: #fff; border: 2px solid; border-color: #505058 #f0f0f0 #f0f0f0 #505058; padding: 0 2px; }
.filter input { width: 131px; }
.big { width: 28px; height: 28px; }
.push { height: 20px; background: #cfcfe6; border: 2px solid; border-color: #f6f4fa #9090b0 #9090b0 #f6f4fa; }
.start { width: 52px; margin-left: auto; margin-right: 2px; color: #9494a4; text-shadow: 1px 1px #fff; }
.splitter { height: 6px; margin-top: 2px; background: #d4d0c8; border: solid #000; border-width: 0 1px 2px 0; box-shadow: inset 0 1px #fff; }
.tablebox { height: 95px; margin-top: 2px; background: #fff; border: 2px solid; border-color: #606060 #f2e8d8 #f2e8d8 #606060; }
table { width: 100%; border-collapse: separate; border-spacing: 0; table-layout: fixed; }
th { height: 17px; padding: 1px 0 0 5px; text-align: left; font-weight: 400; line-height: 14px; background: #d4d0c8; border: solid #606060; border-width: 0 1px 1px 0; box-shadow: inset 1px 1px #fff; }
th:last-child { border-right: 0; }
.num { width: 18px; }
.name { width: 88px; }
td { padding: 0 0 0 5px; height: 15px; line-height: 15px; }
.dlg-foot { display: flex; justify-content: space-between; align-items: flex-start; height: 39px; padding-right: 8px; }
.globe { width: 50px; height: 39px; overflow: hidden; }
.ok { width: 75px; height: 21px; margin-top: 10px; }

.tools { display: flex; gap: 8px; width: 77px; flex: none; padding: 0 1px 0 4px; background: linear-gradient(90deg, #fff, #cfcfe6 8px, #cfcfe6 68px, #a4a4bc 77px); }
.col { width: 32px; }
.vgroup { display: flex; flex-direction: column; }
.first-a { padding-top: 83px; }
.first-b { padding-top: 59px; }
.near { padding-top: 8px; }
.snug { padding-top: 6px; }
.mid { padding-top: 20px; }
.some { padding-top: 12px; }
.far { padding-top: 38px; }
.tight { padding-top: 4px; }
.hgrip { width: 17px; height: 3px; margin-bottom: 6px; background: #fff; border-bottom: 1px solid #80808c; border-right: 1px solid #80808c; }
.hsep { height: 2px; margin: 1px 0 5px; border-top: 1px solid #8c8c9c; background: #fff; }
.tool { position: relative; height: 30px; padding: 3px 5px 3px 3px; }
.tool .tri, .btool .tri { position: absolute; right: 1px; bottom: 1px; }

.toolbar.bottom { height: 38px; border-bottom: 1px solid #55555f; background: linear-gradient(#fff, #dcdcee 6px, #cfcfe6 13px, #cfcfe6 22px, #9c9cb0 37px); }
.bgroup { display: flex; padding-left: 4px; flex: none; }
.bgroup .grip { margin-right: 5px; }
.bgroup.b1 .grip, .brand .grip { margin-right: 8px; }
.btool { position: relative; width: 28px; height: 32px; margin-top: 3px; padding: 4px 2px; display: block; }
.b1 { width: 48px; }
.b2 { width: 76px; }
.b3 { width: 169px; }
.b4 { width: 359px; }
.b5 { width: 300px; }
.btool .tri { right: -2px; bottom: 2px; }
.brand { display: flex; margin-left: auto; padding-right: 4px; }
.brand .more { margin-left: 6px; }
.logo { width: 42px; height: 32px; margin-left: 2px; }
.status { display: flex; align-items: center; height: 27px; padding: 0 0 1px 2px; border-bottom: 2px solid #e6e4e6; gap: 1px; }
.status label { width: 909px; flex: 0 1 909px; }
.status input { flex: 1; min-width: 0; }
.sbtn { display: flex; align-items: center; justify-content: center; width: 33px; height: 22px; border: 1px solid; border-color: #fff #111 #111 #fff; }
</style>
